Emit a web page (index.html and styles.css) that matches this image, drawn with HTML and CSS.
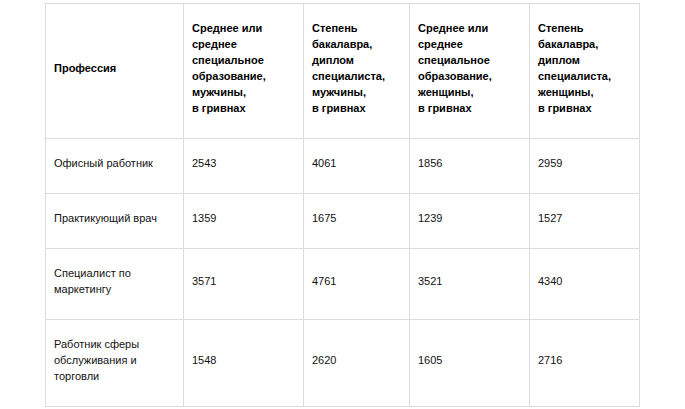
FILE: index.html
```html
<!DOCTYPE html>
<html lang="ru">
<head>
<meta charset="utf-8">
<link rel="stylesheet" href="styles.css">
</head>
<body>
<table class="salary">
  <colgroup>
    <col class="c1"><col class="c2"><col class="c3"><col class="c4"><col class="c5">
  </colgroup>
  <thead>
    <tr>
      <th>Профессия</th>
      <th>Среднее или<br>среднее<br>специальное<br>образование,<br>мужчины,<br>в гривнах</th>
      <th>Степень<br>бакалавра,<br>диплом<br>специалиста,<br>мужчины,<br>в гривнах</th>
      <th>Среднее или<br>среднее<br>специальное<br>образование,<br>женщины,<br>в гривнах</th>
      <th>Степень<br>бакалавра,<br>диплом<br>специалиста,<br>женщины,<br>в гривнах</th>
    </tr>
  </thead>
  <tbody>
    <tr><td>Офисный работник</td><td>2543</td><td>4061</td><td>1856</td><td>2959</td></tr>
    <tr><td>Практикующий врач</td><td>1359</td><td>1675</td><td>1239</td><td>1527</td></tr>
    <tr><td>Специалист по<br>маркетингу</td><td>3571</td><td>4761</td><td>3521</td><td>4340</td></tr>
    <tr><td>Работник сферы<br>обслуживания и<br>торговли</td><td>1548</td><td>2620</td><td>1605</td><td>2716</td></tr>
  </tbody>
</table>
</body>
</html>
```
FILE: styles.css
```css
html, body {
  margin: 0;
  padding: 0;
  background: #fff;
}
body {
  font-family: "Liberation Sans", Arial, sans-serif;
  font-size: 11px;
  line-height: 16px;
  color: #000;
}
.salary {
  margin: 3px 0 0 45px;
  border-collapse: collapse;
  table-layout: fixed;
  width: 594px;
}
.c1 { width: 138px; }
.c2 { width: 120px; }
.c3 { width: 106px; }
.c4 { width: 120px; }
.c5 { width: 110px; }
.salary th,
.salary td {
  border: 1px solid #dcdcdc;
  padding: 16px 8px 22px 8px;
  text-align: left;
  vertical-align: middle;
}
.salary th {
  font-weight: bold;
}
.salary td {
  color: #111;
}
```
